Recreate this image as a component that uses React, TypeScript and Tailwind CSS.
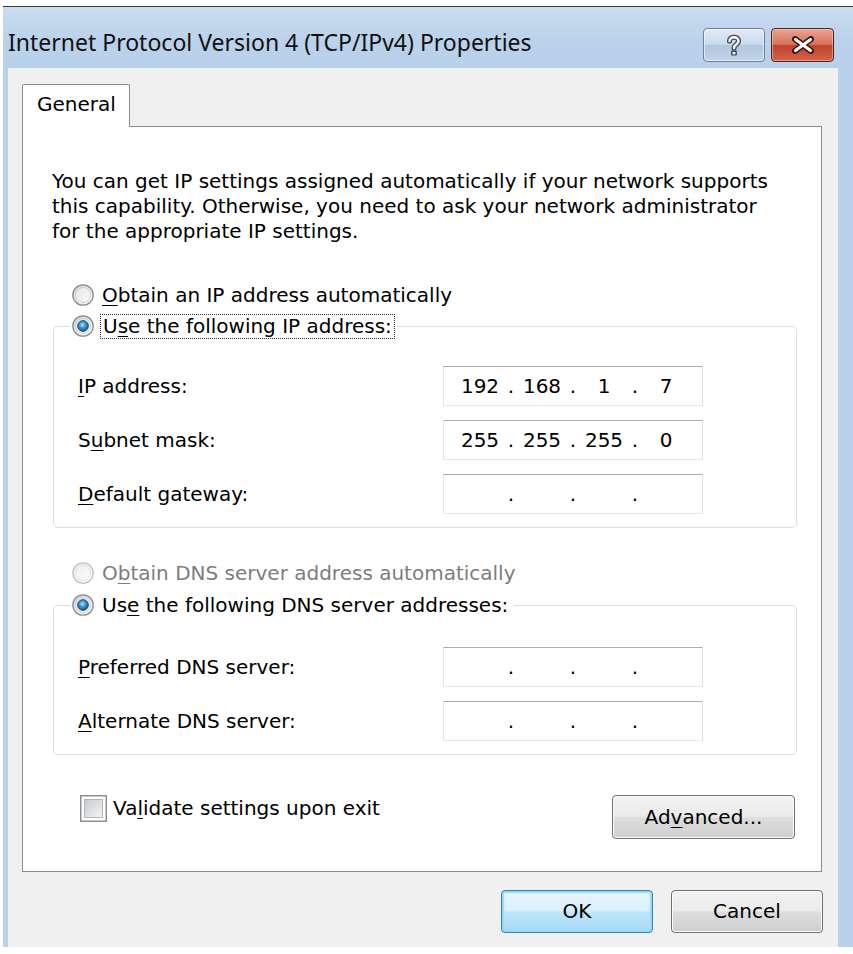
import React from "react";

function Radio({ checked = false, disabled = false }: { checked?: boolean; disabled?: boolean }) {
  const id = checked ? "rc" : disabled ? "rd" : "ru";
  return (
    <svg width="22" height="22" viewBox="0 0 22 22" className="shrink-0">
      <defs>
        <linearGradient id={id + "o"} x1="0" y1="0" x2="1" y2="1">
          <stop offset="0" stopColor={disabled ? "#e6e6e6" : "#d0d0d0"} />
          <stop offset="1" stopColor="#ffffff" />
        </linearGradient>
        <linearGradient id={id + "i"} x1="0" y1="0" x2="1" y2="1">
          <stop offset="0" stopColor={disabled ? "#efefef" : "#e4e4e4"} />
          <stop offset="1" stopColor="#fbfbfb" />
        </linearGradient>
        <radialGradient id={id + "d"} cx="0.45" cy="0.4" r="0.6">
          <stop offset="0" stopColor="#b9e6fb" />
          <stop offset="0.45" stopColor="#3d9ad4" />
          <stop offset="1" stopColor="#15507e" />
        </radialGradient>
      </defs>
      <circle cx="11" cy="11" r="10.2" fill={`url(#${id}o)`} stroke={disabled ? "#c4c4c4" : "#8b8d8f"} strokeWidth="1.3" />
      <circle cx="11" cy="11" r="7.6" fill={`url(#${id}i)`} stroke={disabled ? "#dedede" : "#c9c9c9"} strokeWidth="0.8" />
      {checked && <circle cx="11" cy="11" r="5.4" fill={`url(#${id}d)`} stroke="#1d4f78" strokeWidth="0.9" />}
    </svg>
  );
}

function CheckBox() {
  return (
    <svg width="27" height="27" viewBox="0 0 27 27" className="shrink-0">
      <defs>
        <linearGradient id="cbg" x1="0" y1="0" x2="1" y2="1">
          <stop offset="0" stopColor="#c6cad0" />
          <stop offset="1" stopColor="#f5f5f5" />
        </linearGradient>
      </defs>
      <rect x="0.75" y="0.75" width="25.5" height="25.5" fill="#ffffff" stroke="#8e8f8f" strokeWidth="1.5" />
      <rect x="4.5" y="4.5" width="18" height="18" fill="url(#cbg)" stroke="#b2b6bb" strokeWidth="1" />
    </svg>
  );
}

function IPBox({ parts }: { parts: string[] }) {
  return (
    <div className="w-[260px] h-[40px] shrink-0 bg-white border border-t-[#abadb3] border-l-[#e2e3ea] border-r-[#dbdfe6] border-b-[#e3e9ef] flex items-center pl-[11px]">
      {parts.map((p, i) => (
        <React.Fragment key={i}>
          {i > 0 && <span className="w-[12px] text-center">.</span>}
          <span className="w-[50px] text-center">{p}</span>
        </React.Fragment>
      ))}
    </div>
  );
}

function Row({ label, parts }: { label: React.ReactNode; parts: string[] }) {
  return (
    <div className="flex items-center justify-between h-[40px]">
      <span>{label}</span>
      <IPBox parts={parts} />
    </div>
  );
}

const U = ({ children }: { children: React.ReactNode }) => (
  <span className="underline underline-offset-[3px] decoration-1">{children}</span>
);

export default function App() {
  return (
    <div className="w-[853px] h-[954px] bg-white pt-[6px] overflow-hidden font-['DejaVu_Sans',sans-serif] text-[20px] leading-[25px] text-black">
      <div className="ml-[3px] w-[850px] h-[941px] flex flex-col bg-[#b9d1ea] border-t border-[#3d3d3d]">
        {/* Title bar */}
        <div className="h-[61px] shrink-0 flex items-start pl-[5px] pr-[19px] bg-[linear-gradient(#cadcf0,#b9d1ea_60%)]">
          <div className="mt-[20px] leading-[30px] text-[23px] font-['Noto_Sans','Open_Sans',sans-serif] text-[#111]">
            Internet Protocol Version 4 (TCP/IPv4) Properties
          </div>
          <div className="ml-auto mt-[21px] flex gap-[6px]">
            <div className="w-[62px] h-[34px] rounded-[4px] border border-[#6f819a] bg-[linear-gradient(#e3ebf6_0%,#cad9eb_48%,#b2c6de_52%,#c4d5ea_100%)] shadow-[inset_0_0_0_1px_rgba(255,255,255,0.55)] flex items-center justify-center">
              <svg width="18" height="24" viewBox="0 0 18 24">
                <path d="M4.5 8 C4.5 3 13.5 3 13.5 8 C13.5 11.5 9 11.5 9 15" fill="none" stroke="#3e4c5e" strokeWidth="5.2" strokeLinecap="round" />
                <rect x="6.1" y="17.6" width="5.8" height="5" rx="1" fill="#3e4c5e" />
                <path d="M4.5 8 C4.5 3 13.5 3 13.5 8 C13.5 11.5 9 11.5 9 15" fill="none" stroke="#ffffff" strokeWidth="2.4" strokeLinecap="round" />
                <rect x="7.6" y="19" width="2.8" height="2.3" fill="#ffffff" />
              </svg>
            </div>
            <div className="w-[63px] h-[34px] rounded-[4px] border border-[#50231b] bg-[linear-gradient(#e9a594_0%,#d8705b_48%,#c3412b_52%,#d2644b_100%)] shadow-[inset_0_0_0_1px_rgba(255,220,210,0.45)] flex items-center justify-center">
              <svg width="24" height="18" viewBox="0 0 24 18">
                <path d="M4 3 L20 15 M20 3 L4 15" fill="none" stroke="#3b1912" strokeWidth="6" strokeLinecap="round" />
                <path d="M4.5 3.5 L19.5 14.5 M19.5 3.5 L4.5 14.5" fill="none" stroke="#ffffff" strokeWidth="3" strokeLinecap="round" />
              </svg>
            </div>
          </div>
        </div>

        {/* Client area */}
        <div className="flex-1 ml-[5px] mr-[15px] bg-[#f0f0f0] pt-[16px] pl-[14px] flex flex-col">
          <div className="relative z-10 -mb-px w-[108px] h-[43px] bg-white border border-b-0 border-[#898c95] rounded-t-[2px] pl-[14px] pt-[7px]">
            General
          </div>
          <div className="w-[800px] h-[746px] shrink-0 bg-white border border-[#898c95] flex flex-col">
            <p className="ml-[29px] mt-[42px] w-[735px]">
              You can get IP settings assigned automatically if your network supports this capability. Otherwise, you need to ask your network administrator for the appropriate IP settings.
            </p>

            <div className="ml-[49px] mt-[38px] h-[26px] flex items-center gap-[8px]">
              <Radio />
              <span>
                <U>O</U>btain an IP address automatically
              </span>
            </div>

            <fieldset className="ml-[30px] mt-[5px] w-[744px] border border-[#d5dfe5] rounded-[5px] pl-[24px] pr-[93px] pt-[27px] pb-[13px]">
              <legend className="ml-[-8px] px-[2px] h-[26px] flex items-center gap-[6px]">
                <Radio checked />
                <span className="border border-dotted border-[#333] px-[2px] leading-[23px]">
                  U<U>s</U>e the following IP address:
                </span>
              </legend>
              <div className="flex flex-col gap-[14px]">
                <Row label={<><U>I</U>P address:</>} parts={["192", "168", "1", "7"]} />
                <Row label={<>S<U>u</U>bnet mask:</>} parts={["255", "255", "255", "0"]} />
                <Row label={<><U>D</U>efault gateway:</>} parts={["", "", "", ""]} />
              </div>
            </fieldset>

            <div className="ml-[49px] mt-[32px] h-[26px] flex items-center gap-[8px] text-[#7d7d7d]">
              <Radio disabled />
              <span>
                O<U>b</U>tain DNS server address automatically
              </span>
            </div>

            <fieldset className="ml-[30px] mt-[6px] w-[744px] border border-[#d5dfe5] rounded-[5px] pl-[24px] pr-[93px] pt-[29px] pb-[13px]">
              <legend className="ml-[-8px] px-[2px] h-[26px] flex items-center gap-[8px]">
                <Radio checked />
                <span className="pr-[4px]">
                  Us<U>e</U> the following DNS server addresses:
                </span>
              </legend>
              <div className="flex flex-col gap-[14px]">
                <Row label={<><U>P</U>referred DNS server:</>} parts={["", "", "", ""]} />
                <Row label={<><U>A</U>lternate DNS server:</>} parts={["", "", "", ""]} />
              </div>
            </fieldset>

            <div className="ml-[57px] mr-[26px] mt-[40px] flex items-start justify-between">
              <div className="flex items-center gap-[6px] h-[27px]">
                <CheckBox />
                <span>
                  Va<U>l</U>idate settings upon exit
                </span>
              </div>
              <button className="w-[183px] h-[44px] rounded-[4px] border border-[#707070] bg-[linear-gradient(#f2f2f2_0%,#ebebeb_48%,#dddddd_52%,#cfcfcf_100%)] shadow-[inset_0_0_0_1px_#fbfbfb] text-black">
                Ad<U>v</U>anced...
              </button>
            </div>
          </div>

          <div className="mt-[18px] pr-[15px] flex justify-end gap-[18px]">
            <button className="w-[152px] h-[43px] rounded-[4px] border border-[#3c7fb1] bg-[linear-gradient(#eaf6fd_0%,#d9f0fc_48%,#bee6fd_52%,#a7d9f5_100%)] shadow-[inset_0_0_1px_2px_#8fdcf7] text-black">
              OK
            </button>
            <button className="w-[152px] h-[43px] rounded-[4px] border border-[#707070] bg-[linear-gradient(#f2f2f2_0%,#ebebeb_48%,#dddddd_52%,#cfcfcf_100%)] shadow-[inset_0_0_0_1px_#fbfbfb] text-black">
              Cancel
            </button>
          </div>
        </div>
      </div>
    </div>
  );
}
